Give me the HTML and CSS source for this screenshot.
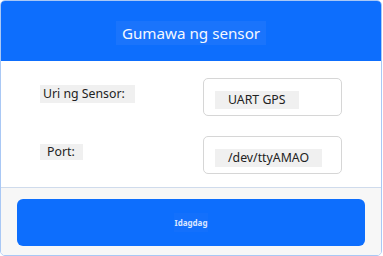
FILE: index.html
```html
<!DOCTYPE html>
<html lang="tl">
<head>
    <meta charset="UTF-8">
    <meta name="viewport" content="width=device-width, initial-scale=1.0">
    <title>Gumawa ng sensor</title>
    <link rel="stylesheet" href="styles.css">
</head>
<body>
    <div class="card">
        <div class="card-header">
            <span class="title">Gumawa ng sensor</span>
        </div>
        <div class="card-body">
            <div class="row">
                <div class="label-col"><span class="label">Uri ng Sensor:</span></div>
                <div class="field"><span class="value">UART GPS</span></div>
            </div>
            <div class="row">
                <div class="label-col"><span class="label label-port">Port:</span></div>
                <div class="field"><span class="value">/dev/ttyAMAO</span></div>
            </div>
        </div>
        <div class="card-footer">
            <button class="add-btn"><span>Idagdag</span></button>
        </div>
    </div>
</body>
</html>
```

FILE: styles.css
```css
body {
    margin: 0;
    padding: 0;
    font-family: "Noto Sans", "Open Sans", sans-serif;
    background-color: #fff;
}
.card {
    width: 382px;
    height: 256px;
    box-sizing: border-box;
    border: 1px solid #a9c8f5;
    border-radius: 5px;
    overflow: hidden;
    display: flex;
    flex-direction: column;
}
.card-header {
    height: 60px;
    background-color: #0d6efd;
    display: flex;
    align-items: center;
    justify-content: center;
}
.title {
    background-color: #1a74fc;
    color: #f4f8ff;
    font-size: 15.2px;
    padding: 0 6px;
    line-height: 24px;
    margin-top: 3px;
}
.card-body {
    background-color: #fff;
    padding: 17px 0 13px 0;
    display: flex;
    flex-direction: column;
    gap: 20px;
}
.row {
    display: flex;
    align-items: flex-start;
}
.label-col {
    width: 202px;
    padding-left: 39px;
    padding-top: 3px;
    box-sizing: border-box;
}
.label {
    display: inline-block;
    background-color: #f0f0f0;
    color: #222;
    font-size: 12.3px;
    line-height: 18px;
    padding: 0 10px 0 3px;
}
.label-port {
    padding: 0 8px 0 7px;
    line-height: 16px;
}
.field {
    width: 139px;
    height: 38px;
    box-sizing: border-box;
    border: 1px solid #d6d6d6;
    border-radius: 5px;
    padding: 8px 0 0 11px;
}
.value {
    display: inline-block;
    background-color: #f0f0f0;
    color: #222;
    font-size: 12.3px;
    line-height: 18px;
    padding: 0 13px;
}
.card-footer {
    flex: 1;
    background-color: #f7f7f7;
    border-top: 1px solid #cfdbec;
    padding: 11px 16px 8px 16px;
}
.add-btn {
    width: 100%;
    height: 47px;
    background-color: #0d6efd;
    border: none;
    border-radius: 6px;
    color: #dbe7ff;
    font-family: "Noto Sans", sans-serif;
    font-size: 8px;
    font-weight: bold;
    cursor: pointer;
}
.add-btn span {
    background-color: #1370fc;
    padding: 4px 1px;
}
```
